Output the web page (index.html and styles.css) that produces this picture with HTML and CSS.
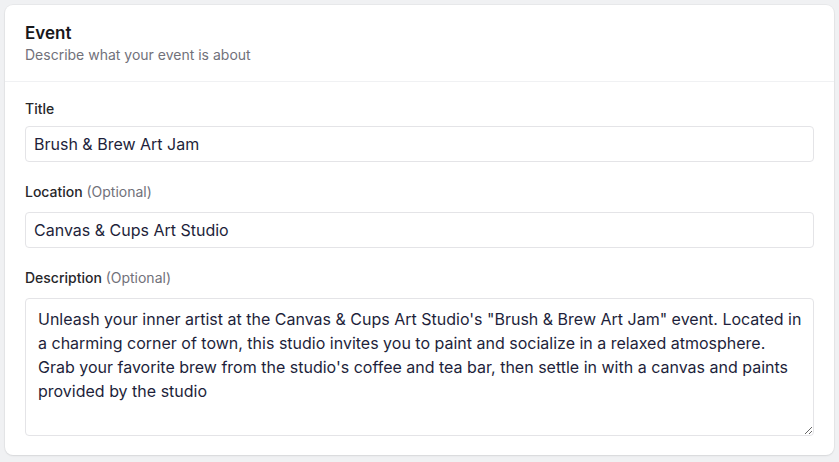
FILE: index.html
```html
<!DOCTYPE html>
<html lang="en">
<head>
<meta charset="utf-8">
<title>Event</title>
<link rel="stylesheet" href="styles.css">
</head>
<body>
<div class="card">
  <div class="card-header">
    <h2 class="card-title">Event</h2>
    <p class="card-desc">Describe what your event is about</p>
  </div>
  <div class="card-body">
    <div class="field">
      <label class="label">Title</label>
      <input class="input" type="text" value="Brush &amp; Brew Art Jam">
    </div>
    <div class="field">
      <label class="label label-opt">Location <span class="opt">(Optional)</span></label>
      <input class="input" type="text" value="Canvas &amp; Cups Art Studio">
    </div>
    <div class="field">
      <label class="label label-opt">Description <span class="opt">(Optional)</span></label>
      <textarea class="textarea">Unleash your inner artist at the Canvas &amp; Cups Art Studio's "Brush &amp; Brew Art Jam" event. Located in a charming corner of town, this studio invites you to paint and socialize in a relaxed atmosphere.
Grab your favorite brew from the studio's coffee and tea bar, then settle in with a canvas and paints provided by the studio</textarea>
    </div>
  </div>
</div>
</body>
</html>
```
FILE: styles.css
```css
* { box-sizing: border-box; }
html, body { margin: 0; padding: 0; }
body {
  background: #f0f1f3;
  font-family: Inter, "Noto Sans", sans-serif;
  color: #111827;
  padding: 5px;
}
.card {
  background: #fff;
  border-radius: 8px;
  box-shadow: 0 1px 2px rgba(0,0,0,0.08), 0 0 0 1px rgba(0,0,0,0.03);
  height: 450px;
}
.card-header {
  padding: 16px 20px 16px;
  border-bottom: 1px solid #f0f1f3;
}
.card-title {
  margin: 0;
  font-size: 17px;
  font-weight: 600;
  line-height: 24px;
  color: #18181b;
}
.card-desc {
  margin: 0;
  font-size: 14px;
  line-height: 20px;
  color: #71717a;
}
.card-body {
  padding: 17px 20px 20px;
  display: flex;
  flex-direction: column;
  gap: 20px;
}
.field {
  display: flex;
  flex-direction: column;
  gap: 7px;
}
.label {
  font-size: 14px;
  font-weight: 500;
  line-height: 20px;
  color: #27272a;
}
.label-opt {
  margin-bottom: 3px;
}
.opt {
  font-weight: 400;
  color: #71717a;
}
.input, .textarea {
  font-family: Inter, "Noto Sans", sans-serif;
  font-size: 16px;
  color: #1e1f3b;
  border: 1px solid #e4e4e7;
  border-radius: 4px;
  background: #fff;
  width: 100%;
  outline: none;
}
.input {
  height: 36px;
  padding: 0 8px;
}
.textarea {
  height: 138px;
  padding: 8px 6px 8px 12px;
  line-height: 24px;
  resize: vertical;
}
```
